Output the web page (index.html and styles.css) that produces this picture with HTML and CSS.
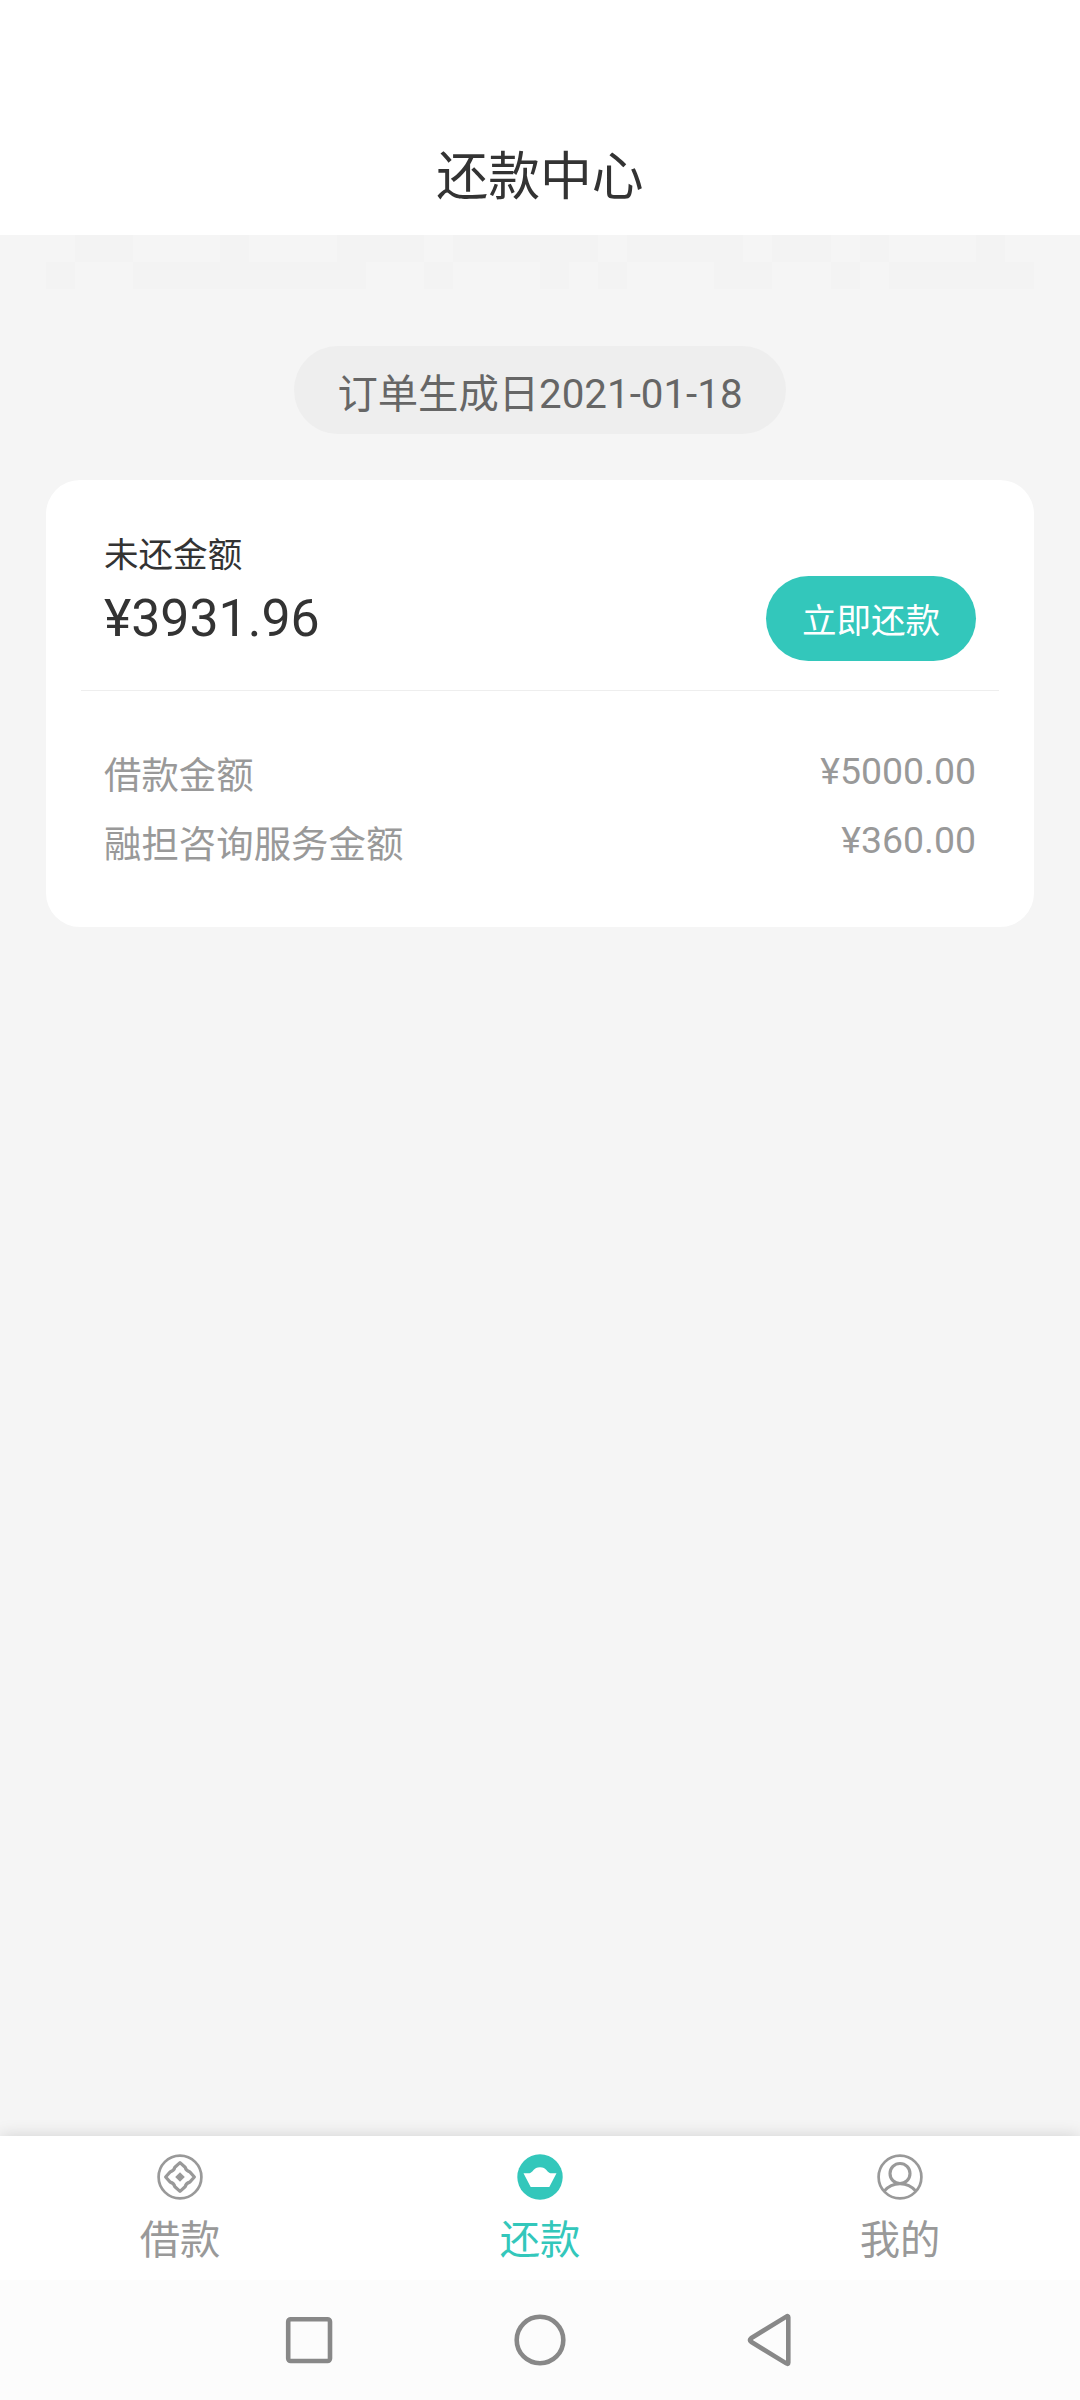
FILE: index.html
```html
<!DOCTYPE html>
<html lang="zh-CN">
<head>
<meta charset="utf-8">
<title>还款中心</title>
<link rel="stylesheet" href="styles.css">
</head>
<body>
<div class="screen">
  <header class="header"><h1 class="title">还款中心</h1></header>
  <main class="content">
    <svg class="mosaic" viewBox="0 0 34 2" preserveAspectRatio="none" shape-rendering="crispEdges" aria-hidden="true">
      <path fill="#f3f3f3" d="M1 0h2v1h-2zM6 0h1v1h-1zM10 0h3v1h-3zM14 0h5v1h-5zM20 0h4v1h-4zM25 0h2v1h-2zM28 0h1v1h-1zM32 0h1v1h-1zM0 1h1v1h-1zM3 1h8v1h-8zM13 1h1v1h-1zM17 1h1v1h-1zM19 1h1v1h-1zM23 1h2v1h-2zM27 1h1v1h-1zM29 1h5v1h-5z"/>
    </svg>
    <div class="date-pill">订单生成日2021-01-18</div>
    <section class="card">
      <div class="summary">
        <div class="due">
          <div class="due-label">未还金额</div>
          <div class="due-amount">¥3931.96</div>
        </div>
        <button class="pay" type="button">立即还款</button>
      </div>
      <div class="details">
        <div class="row"><span class="name">借款金额</span><span class="value">¥5000.00</span></div>
        <div class="row"><span class="name">融担咨询服务金额</span><span class="value">¥360.00</span></div>
      </div>
    </section>
  </main>
  <nav class="tabs">
    <a class="tab">
      <svg class="tab-icon" viewBox="0 0 46 46" fill="none" stroke="currentColor">
        <circle cx="23" cy="23" r="21.4" stroke-width="2.7"/>
        <path stroke-width="3.2" stroke-linejoin="round" d="M23 8.6L28.1 13.2Q29 17 32.8 17.9L37.4 23L32.8 28.1Q29 29 28.1 32.8L23 37.4L17.9 32.8Q17 29 13.2 28.1L8.6 23L13.2 17.9Q17 17 17.9 13.2Z"/>
        <path fill="currentColor" stroke="none" d="M23 18.2L27.8 23L23 27.8L18.2 23Z"/>
      </svg>
      <span class="tab-label">借款</span>
    </a>
    <a class="tab active">
      <svg class="tab-icon" viewBox="0 0 46 46">
        <circle cx="23" cy="23" r="22.7" fill="currentColor"/>
        <path fill="#fff" d="M6.5 19.3H12.6C15.8 18.8 16.5 13.3 23 13.3S30.2 18.8 33.4 19.3H39.5L32.3 33H13.7Z"/>
      </svg>
      <span class="tab-label">还款</span>
    </a>
    <a class="tab">
      <svg class="tab-icon" viewBox="0 0 46 46" fill="none" stroke="currentColor">
        <circle cx="23" cy="23" r="21.4" stroke-width="2.7"/>
        <circle cx="23" cy="19.5" r="10" stroke-width="3.1"/>
        <path stroke-width="2.9" d="M7 37.3C11 32.6 16.5 29.8 23 29.8S35 32.6 39 37.3"/>
      </svg>
      <span class="tab-label">我的</span>
    </a>
  </nav>
  <div class="system-nav">
    <svg class="key" viewBox="0 0 60 60"><rect x="9.2" y="9.2" width="41.8" height="41.8" rx="2.5"/></svg>
    <svg class="key" viewBox="0 0 60 60"><circle cx="30" cy="30" r="23.3"/></svg>
    <svg class="key" viewBox="0 0 60 60"><path d="M47.3 7.2V52.8Q47.3 54.6 45.3 53.4L10.1 31.8Q7.8 30 10.1 28.2L45.3 6.6Q47.3 5.4 47.3 7.2Z"/></svg>
  </div>
</div>
</body>
</html>
```
FILE: styles.css
```css
* { box-sizing: border-box; }

body {
  margin: 0;
  background: #f5f5f5;
  color: #333;
  font-family: Roboto, "Noto Sans CJK SC", sans-serif;
}

.screen {
  display: flex;
  flex-direction: column;
  width: 1080px;
  height: 2400px;
}

.header {
  height: 235px;
  padding-top: 140px;
  background: #fff;
}

.title {
  margin: 0;
  font-size: 51.84px;
  font-weight: 400;
  line-height: 76px;
  text-align: center;
}

.content {
  display: flex;
  flex: 1;
  flex-direction: column;
  align-items: center;
  padding: 0 46px;
}

.mosaic {
  display: block;
  width: 988px;
  height: 54px;
}

.date-pill {
  height: 88px;
  margin-top: 57px;
  padding: 3px 43.2px 0;
  border-radius: 44px;
  background: #eee;
  color: #666;
  font-size: 40.32px;
  line-height: 92px;
  white-space: nowrap;
}

.card {
  width: 988px;
  height: 447px;
  margin-top: 46px;
  padding: 0 35px;
  border-radius: 34px;
  background: #fff;
}

.summary {
  display: flex;
  justify-content: space-between;
  height: 211px;
  padding: 48px 23px 0;
  border-bottom: 1px solid #eee;
}

.due { padding-top: 2px; }

.due-label {
  font-size: 34.56px;
  line-height: 50px;
}

.due-amount {
  font-size: 51.84px;
  line-height: 78px;
}

.pay {
  width: 210px;
  height: 85px;
  margin-top: 48px;
  padding: 6px 0 0;
  border: 0;
  border-radius: 43px;
  background: #33c7bb;
  color: #fff;
  font: 34.56px/79px Roboto, "Noto Sans CJK SC", sans-serif;
}

.details { padding: 49px 23px 0; }

.row {
  display: flex;
  justify-content: space-between;
  height: 69px;
  color: #999;
  font-size: 37.44px;
}

.name { line-height: 72px; }
.value { line-height: 62px; }

.tabs {
  display: flex;
  height: 144px;
  background: #fff;
  box-shadow: 0 0 16px rgba(0, 0, 0, 0.15);
}

.tab {
  display: flex;
  flex: 1;
  flex-direction: column;
  align-items: center;
  padding-top: 18px;
  color: #999;
}

.active { color: #33c7bb; }

.tab-icon {
  width: 46px;
  height: 46px;
}

.tab-label {
  margin-top: 11px;
  font-size: 40.32px;
  line-height: 60px;
}

.system-nav {
  position: relative;
  display: flex;
  align-items: center;
  justify-content: center;
  gap: 171px;
  height: 120px;
  background: #fcfcfc;
}

.key {
  width: 60px;
  height: 60px;
  fill: none;
  stroke: #888;
  stroke-width: 4.6;
}
```
